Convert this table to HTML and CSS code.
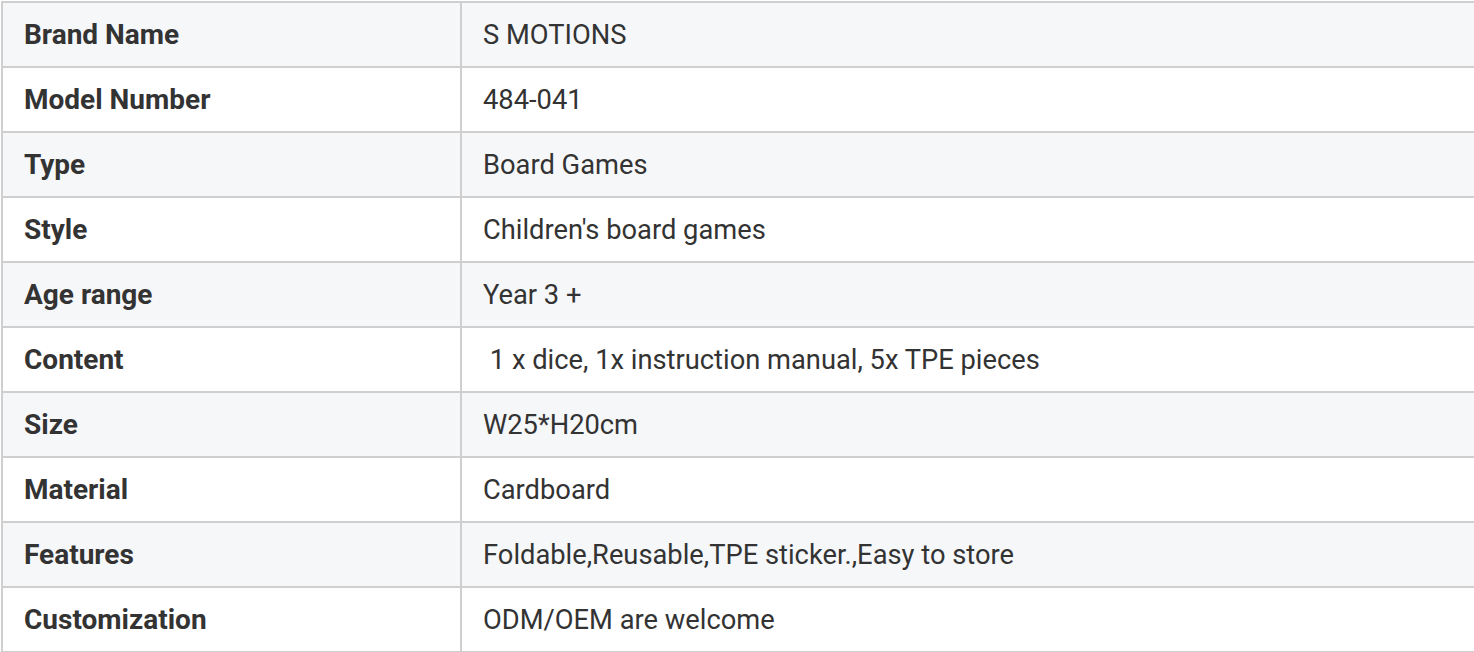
FILE: index.html
```html
<!DOCTYPE html>
<html>
<head>
<meta charset="utf-8">
<link rel="stylesheet" href="styles.css">
</head>
<body>
<table class="spec">
  <tbody>
    <tr><td class="label">Brand Name</td><td class="value">S MOTIONS</td></tr>
    <tr><td class="label">Model Number</td><td class="value">484-041</td></tr>
    <tr><td class="label">Type</td><td class="value">Board Games</td></tr>
    <tr><td class="label">Style</td><td class="value">Children's board games</td></tr>
    <tr><td class="label">Age range</td><td class="value">Year 3 +</td></tr>
    <tr><td class="label">Content</td><td class="value">&nbsp;1 x dice, 1x instruction manual, 5x TPE pieces</td></tr>
    <tr><td class="label">Size</td><td class="value">W25*H20cm</td></tr>
    <tr><td class="label">Material</td><td class="value">Cardboard</td></tr>
    <tr><td class="label">Features</td><td class="value">Foldable,Reusable,TPE sticker.,Easy to store</td></tr>
    <tr><td class="label">Customization</td><td class="value">ODM/OEM are welcome</td></tr>
  </tbody>
</table>
</body>
</html>
```
FILE: styles.css
```css
html, body {
  margin: 0;
  padding: 0;
  background: #ffffff;
  overflow: hidden;
}
body {
  padding: 1px 0 0 1px;
  font-family: Roboto, "Liberation Sans", sans-serif;
  color: #333333;
}
.spec {
  border-collapse: collapse;
  width: 1500px;
  table-layout: fixed;
}
.spec tr:nth-child(odd) {
  background: #f6f7f9;
}
.spec td {
  border: 2px solid #cfcfcf;
  height: 65px;
  padding: 0 0 0 21px;
  box-sizing: border-box;
  vertical-align: middle;
  line-height: 32px;
}
.spec td.label {
  width: 459px;
  font-weight: 700;
  font-size: 28px;
}
.spec td.value {
  font-weight: 400;
  font-size: 27.3px;
}
```
